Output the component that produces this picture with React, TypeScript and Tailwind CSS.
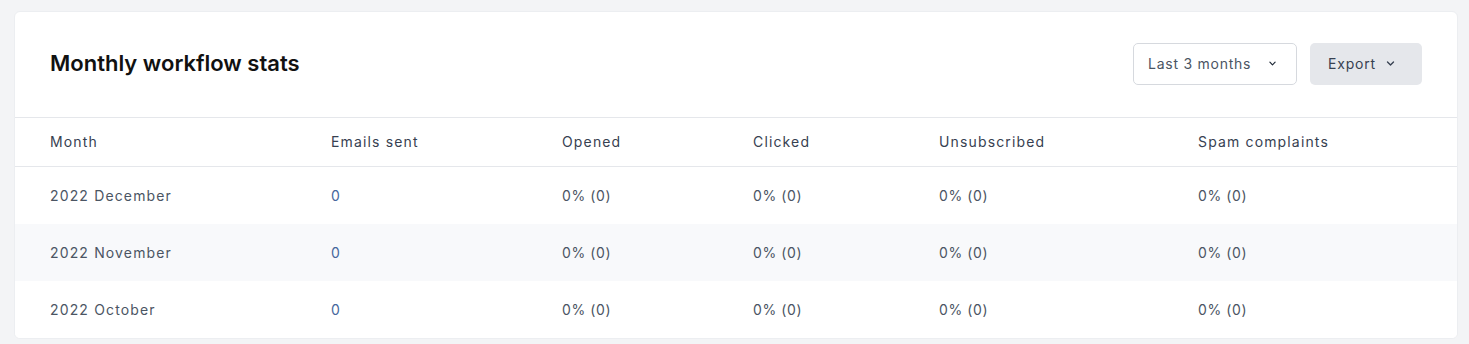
import React from "react";

const Chevron = ({ className = "" }: { className?: string }) => (
  <svg viewBox="0 0 20 20" fill="none" stroke="currentColor" strokeWidth="1.8" strokeLinecap="round" strokeLinejoin="round" className={className}>
    <path d="M6 8l4 4 4-4" />
  </svg>
);

const rows = ["2022 December", "2022 November", "2022 October"];
const cols = ["w-[281px]", "w-[231px]", "w-[191px]", "w-[186px]", "w-[259px]", "flex-1"];
const headers = ["Month", "Emails sent", "Opened", "Clicked", "Unsubscribed", "Spam complaints"];

export default function App() {
  return (
    <div className="min-h-[344px] bg-[#f3f4f6] pt-[11px] pl-[14px] pr-[11px] pb-[5px]" style={{ fontFamily: "Inter, 'Noto Sans', sans-serif" }}>
      <div className="bg-white rounded-md border border-[#eceef1] overflow-hidden">
        <div className="flex items-center justify-between h-[106px] pl-[35px] pr-[35px] pb-[2px] border-b border-[#e5e7eb]">
          <h2 className="text-[22px] font-semibold text-[#111111]">Monthly workflow stats</h2>
          <div className="flex items-center gap-[13px]">
            <button className="flex items-center justify-between w-[164px] h-[42px] pl-[14px] pr-[17px] rounded-[5px] border border-[#d6d9de] bg-white text-[14px] text-[#4b5563] tracking-[0.75px]">
              <span>Last 3 months</span>
              <Chevron className="w-[13px] h-[13px] text-[#1f2937]" />
            </button>
            <button className="flex items-center gap-[7px] w-[112px] h-[42px] pl-[18px] rounded-[5px] bg-[#e5e7eb] text-[14px] text-[#374151] tracking-[0.8px]">
              <span>Export</span>
              <Chevron className="w-[15px] h-[15px] text-[#374151]" />
            </button>
          </div>
        </div>
        <div className="flex items-center h-[49px] pl-[35px] pb-[2px] border-b border-[#e5e7eb] text-[14px] text-[#374151] tracking-[1.15px]">
          {headers.map((h, i) => (
            <div key={h} className={cols[i]}>{h}</div>
          ))}
        </div>
        {rows.map((r, ri) => (
          <div key={r} className={`flex items-center h-[57px] pl-[35px] text-[14px] text-[#4b5563] tracking-[1.15px] ${ri === 1 ? "bg-[#f8f9fb]" : "bg-white"}`}>
            <div className={cols[0]}>{r}</div>
            <div className={`${cols[1]} text-[#46679c]`}>0</div>
            <div className={`${cols[2]} tracking-[0.6px]`}>0% (0)</div>
            <div className={`${cols[3]} tracking-[0.6px]`}>0% (0)</div>
            <div className={`${cols[4]} tracking-[0.6px]`}>0% (0)</div>
            <div className={`${cols[5]} tracking-[0.6px]`}>0% (0)</div>
          </div>
        ))}
      </div>
    </div>
  );
}
